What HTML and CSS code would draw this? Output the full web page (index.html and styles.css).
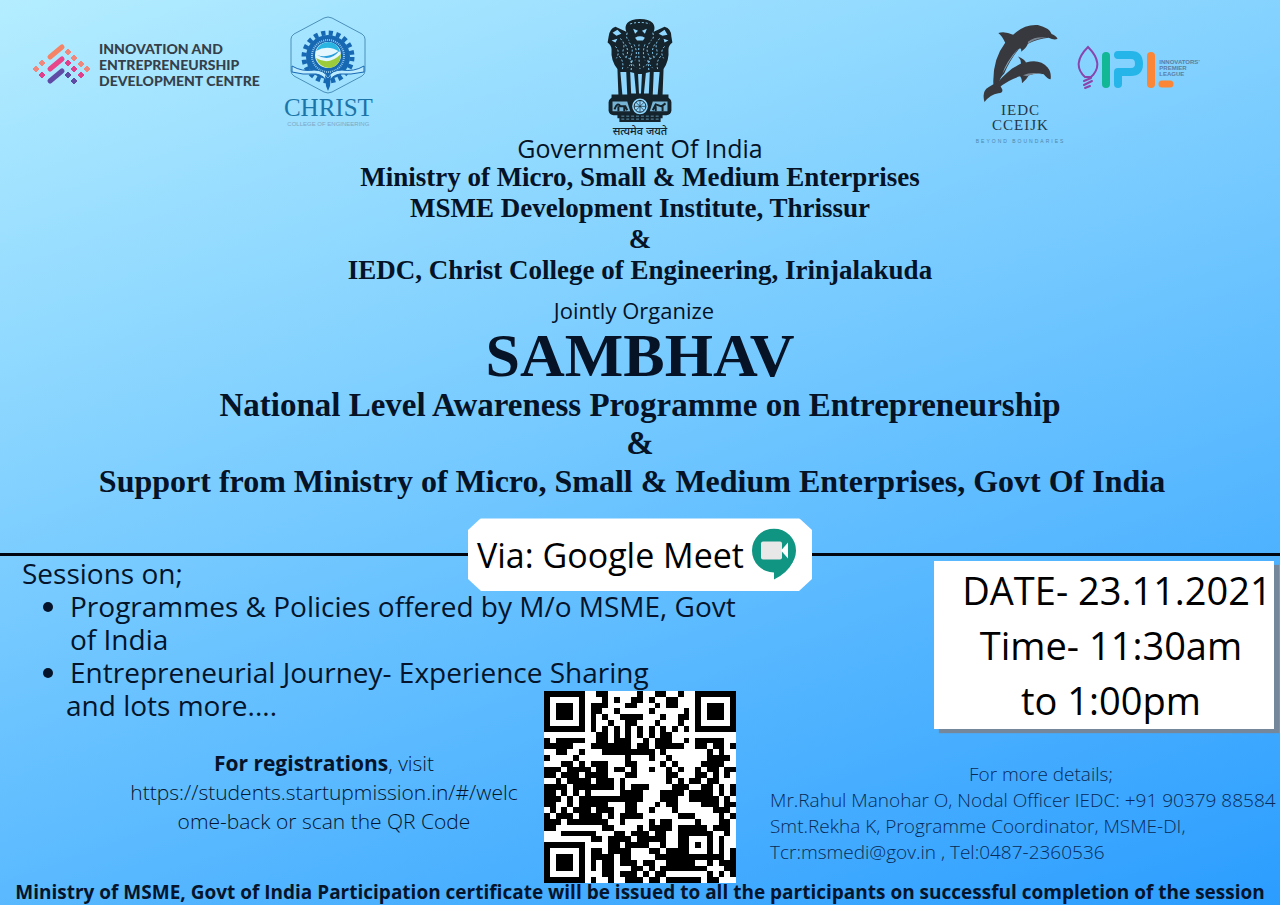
FILE: index.html
```html
<!DOCTYPE html>
<html lang="en">
<head>
<meta charset="utf-8">
<title>SAMBHAV - National Level Awareness Programme</title>
<link rel="stylesheet" href="styles.css">
</head>
<body>
<main class="poster">
  <header class="logos">
    <div class="side">
      <div class="iedc">
        <svg class="iedc-mark" viewBox="0 0 58 44" aria-hidden="true">
          <g stroke-linecap="round" stroke-width="5">
            <path d="M17 14L29 4" stroke="#f58466"/>
            <path d="M17 26L29 16" stroke="#e8458b"/>
            <path d="M17 38L29 28" stroke="#5f4aa5"/>
          </g>
          <g fill="#f0877c">
            <path d="M35 6l3 3-3 3-3-3zM41 12l3 3-3 3-3-3zM48 18l3 3-3 3-3-3zM3 23l3 3-3 3-3-3zM9 17l3 3-3 3-3-3zM54 23l3 3-3 3-3-3z" stroke="#f0877c" stroke-width="1"/>
          </g>
          <g fill="#e0408b" stroke="#e0408b">
            <path d="M9 29l3 3-3 3-3-3zM35 17l3 3-3 3-3-3zM41 23l3 3-3 3-3-3zM48 29l3 3-3 3-3-3z"/>
          </g>
          <path d="M35 29l3 3-3 3-3-3zM41 35l3 3-3 3-3-3z" fill="#5f4aa5" stroke="#5f4aa5"/>
        </svg>
        <p class="iedc-name">INNOVATION AND<br>ENTREPRENEURSHIP<br>DEVELOPMENT CENTRE</p>
      </div>
      <div class="christ">
        <svg class="christ-mark" viewBox="0 0 76 78" aria-hidden="true">
          <path d="M34 2Q38 0 42 2L72 18Q75 20 75 23V55Q75 58 72 60L42 76Q38 78 34 76L4 60Q1 58 1 55V23Q1 20 4 18Z" fill="none" stroke="#4a90b8"/>
          <circle cx="38" cy="41" r="24" fill="none" stroke="#1768b3" stroke-width="5" stroke-dasharray="4.2 3.34"/>
          <circle cx="38" cy="41" r="22" fill="#1768b3"/>
          <circle cx="38" cy="40" r="16" fill="none" stroke="#8cc4ea" stroke-width="2" stroke-dasharray="1 1"/>
          <circle cx="38" cy="39" r="13" fill="#e4f7ff"/>
          <path d="M26 35Q30 26 39 26Q48 27 50 36Q38 28 26 35Z" fill="#29b4e2"/>
          <path d="M26 42Q39 50 51 38Q50 51 39 52Q29 51 26 42Z" fill="#9bcb3b"/>
          <path d="M27 39Q38 43 50 34Q40 47 27 39Z" fill="#2a9edc"/>
          <path d="M2 50Q12 56 24 54Q34 54 38 61Q42 54 52 54Q64 56 74 50V56Q60 59 50 58Q42 59 38 67Q34 59 26 58Q12 59 2 56Z" fill="#bceaff" stroke="#1768b3"/>
          <path d="M35 59L38 62 41 59 40 70 38 75 36 70Z" fill="#1768b3"/>
        </svg>
        <p class="christ-name">CHRIST</p>
        <p class="tiny">COLLEGE OF ENGINEERING</p>
      </div>
    </div>

    <div class="emblem">
      <svg class="emblem-mark" viewBox="0 0 66 108" aria-hidden="true">
        <g fill="#15242c">
          <path d="M20 4Q24 0 33 0Q42 0 46 4Q49 8 47 13L58 8Q65 10 65 18L66 24Q62 27 62 31Q63 42 57 51L56 77H62V84H4V77H11L10 51Q3 42 4 31Q4 27 0 24L1 18Q2 10 8 8L19 13Q17 8 20 4Z"/>
          <rect x="1" y="80" width="64" height="18" rx="5"/>
          <path d="M10 97H56V101H54V105H12V101H10Z"/>
        </g>
        <g fill="#8fd7ff">
          <path d="M13 54L15 77H20L19 54ZM23 54L24 76H29L27 55ZM39 55L37 76H42L43 54ZM47 54L46 77H51L53 54ZM31 56L32 76H34L35 56Z"/>
          <path d="M26 10L31 12 28 15ZM40 10L35 12 38 15ZM28 19Q33 16 38 19L36 22H30ZM5 14L10 11 14 15 9 17ZM52 15L58 11 61 16 56 17ZM4 22L10 20 8 24ZM57 20L62 22 58 24Z"/>
          <path d="M5 84H20L23 94H5ZM43 94L46 84H61V94Z" opacity=".8"/>
        </g>
        <path d="M23 5Q33 2 43 5M13 20Q18 24 16 31T21 40T20 50M22 24Q27 30 24 37T29 49M32 26Q31 35 33 51M43 24Q38 30 42 37T36 49M53 20Q48 24 50 31T45 40T46 50M8 28Q13 33 9 40M58 28Q53 33 57 40M18 26Q22 32 19 39M48 26Q44 32 47 39M27 26Q31 34 28 42M38 26Q35 34 38 42M12 38Q17 44 15 51M54 38Q49 44 51 51M25 42L24 52M41 42L42 52M20 14Q18 20 22 22M46 14Q48 20 44 22" fill="none" stroke="#8fd7ff" stroke-dasharray="2 2"/>
        <path d="M7 92Q10 84 13 89H18L20 93M11 89V94M17 89V94M46 93L49 87 55 89 59 86M49 89V94M56 89V94" fill="none" stroke="#15242c" stroke-width="2"/>
        <circle cx="33" cy="89" r="9" fill="#8fd7ff" stroke="#15242c" stroke-width="2"/>
        <circle cx="33" cy="89" r="6" fill="none" stroke="#15242c"/>
        <path d="M33 83V95M27 89H39M29 85L37 93M37 85L29 93" stroke="#15242c" stroke-width=".7"/>
        <path d="M14 99H52M14 102H52" stroke="#5b91ac" stroke-dasharray="3 2"/>
      </svg>
      <p class="motto" lang="hi">सत्यमेव जयते</p>
    </div>

    <div class="side side-right">
      <div class="dolphins">
        <svg class="dolphin-mark" viewBox="0 0 78 80" aria-hidden="true">
          <path d="M16 9Q23 7 31 11Q42 0 56 1Q68 4 70 10Q75 12 76 15Q73 17 67 14Q56 15 46 20Q44 25 39 28Q40 24 37 25Q28 36 22 50Q16 56 17 61L20 66Q21 70 16 70Q8 71 2 79Q-1 68 6 64L11 61Q10 36 23 19Q20 12 16 9Z" fill="#37393f"/>
          <path d="M36 33Q43 36 44 39Q58 35 66 44Q70 49 69 56Q66 56 62 51Q55 49 47 52Q45 56 40 60Q40 55 38 53Q27 56 16 65L12 63Q19 54 30 45L39 40Q39 36 36 33Z" fill="#37393f"/>
          <path d="M46 18Q54 12 66 14Q55 14 46 20ZM41 52Q50 48 61 51Q52 49 45 53Z" fill="#7b8793"/>
          <path d="M20 51Q24 38 36 25Q27 37 20 51Z" fill="#86a5b7"/>
        </svg>
        <p class="dolphin-name">IEDC<br>CCEIJK</p>
        <p class="tiny beyond">BEYOND BOUNDARIES</p>
      </div>
      <div class="ipl">
        <svg class="ipl-mark" viewBox="0 0 98 46" aria-hidden="true">
          <path d="M8 32Q-6 19 11 2Q28 19 14 32Z" fill="none" stroke="#8a45ad" stroke-width="2"/>
          <path d="M7 36L14 33M7 40L15 36M8 43L13 41" stroke="#8a45ad" stroke-width="2" stroke-linecap="round"/>
          <path d="M29 11V39" stroke="#12b795" stroke-width="8" stroke-linecap="round"/>
          <path d="M41 10H54Q62 10 62 19Q62 27 54 27H41V39" fill="none" stroke="#25b5e9" stroke-width="8" stroke-linecap="round" stroke-linejoin="round"/>
          <path d="M74 11V39" stroke="#fb8637" stroke-width="8" stroke-linecap="round"/>
          <path d="M85 39H93" stroke="#fb8637" stroke-width="7" stroke-linecap="round"/>
        </svg>
        <p class="ipl-name">INNOVATORS’<br>PREMIER<br>LEAGUE</p>
      </div>
    </div>
  </header>

  <section class="titles">
    <p class="gov">Government Of India</p>
    <p class="org">Ministry of Micro, Small &amp; Medium Enterprises</p>
    <p class="org">MSME Development Institute, Thrissur</p>
    <p class="org">&amp;</p>
    <p class="org">IEDC, Christ College of Engineering, Irinjalakuda</p>
    <p class="joint">Jointly Organize</p>
    <h1 class="event">SAMBHAV</h1>
    <p class="theme">National Level Awareness Programme on Entrepreneurship</p>
    <p class="theme">&amp;</p>
    <p class="theme support">Support from Ministry of Micro, Small &amp; Medium Enterprises, Govt Of India</p>
  </section>

  <div class="divider">
    <div class="venue">
      <span>Via: Google Meet</span>
      <svg class="meet" viewBox="0 0 44 52" aria-hidden="true">
        <circle cx="22" cy="22" r="22" fill="#109582"/>
        <path d="M22 40V51Q36 44 41 33Z" fill="#109582"/>
        <rect x="9" y="13" width="21" height="18" rx="2" fill="#e8e8e8"/>
        <path d="M29 22L36 14V30Z" fill="#fff"/>
      </svg>
    </div>
  </div>

  <section class="details">
    <div class="sessions">
      <p>Sessions on;</p>
      <ul class="topics">
        <li>Programmes &amp; Policies offered by M/o MSME, Govt<br>of India</li>
        <li>Entrepreneurial Journey- Experience Sharing</li>
      </ul>
      <p class="more">and lots more....</p>
    </div>
    <div class="schedule">
      <p class="date">DATE- 23.11.2021</p>
      <p>Time- 11:30am</p>
      <p>to 1:00pm</p>
    </div>
    <p class="register"><strong>For registrations</strong>, visit<br>https://students.startupmission.in/#/welc<br>ome-back or scan the QR Code</p>
    <svg class="qr" id="qr" viewBox="0 0 33 33" shape-rendering="crispEdges" role="img" aria-label="QR code"></svg>
    <div class="contact">
      <p class="contact-title">For more details;</p>
      <p>Mr.Rahul Manohar O, Nodal Officer IEDC: +91 90379 88584</p>
      <p>Smt.Rekha K, Programme Coordinator, MSME-DI,</p>
      <p>Tcr:msmedi@gov.in , Tel:0487-2360536</p>
    </div>
  </section>

  <footer class="note">Ministry of MSME, Govt of India Participation certificate will be issued to all the participants on successful completion of the session</footer>
</main>
<script src="qr.js"></script>
</body>
</html>
```
FILE: styles.css
```css
* { box-sizing: border-box; }
body, p, h1, ul { margin: 0; padding: 0; }

body {
  font-family: "Open Sans", "Noto Sans", sans-serif;
  color: #06142b;
}

.poster {
  display: flex;
  flex-direction: column;
  min-height: 100vh;
  overflow: hidden;
  background: linear-gradient(160deg, #b4edff 0%, #76caff 45%, #2b9dff 100%);
}

.logos {
  display: grid;
  grid-template-columns: 1fr auto 1fr;
  height: 135px;
  padding: 16px 80px 0 33px;
}
.side { display: flex; align-items: flex-start; gap: 24px; }
.side-right { justify-content: flex-end; gap: 12px; }

.iedc { display: flex; align-items: center; gap: 8px; padding-top: 25px; }
.iedc-mark { width: 58px; height: 44px; }
.iedc-name {
  font: 900 14px/16px Lato, sans-serif;
  color: #35404a;
  white-space: nowrap;
}

.christ { display: flex; flex-direction: column; align-items: center; }
.christ-mark { width: 76px; height: 78px; }
.christ-name { font: 25px/27px "Liberation Serif", serif; color: #1b75a8; }
.tiny { font: 6px/6px "Liberation Sans", sans-serif; color: #7fa6c4; white-space: nowrap; }

.emblem {
  display: flex;
  flex-direction: column;
  align-items: center;
  padding-top: 3px;
  margin-left: 47px;
}
.emblem-mark { width: 72px; height: 106px; }
.motto { font: 500 11px/14px "Noto Sans Devanagari", "Noto Sans", sans-serif; color: #15242c; }

.dolphins { display: flex; flex-direction: column; align-items: center; padding-top: 8px; }
.dolphin-mark { width: 78px; height: 79px; }
.dolphin-name {
  font: 15px/15px "Liberation Serif", serif;
  letter-spacing: 1px;
  text-align: center;
  color: #243746;
}
.beyond { letter-spacing: 2px; padding-top: 5px; color: #4f86ad; font-size: 5px; }
.ipl { display: flex; align-items: center; padding-top: 29px; }
.ipl-mark { width: 98px; height: 46px; flex: none; margin-right: -16px; }
.ipl-name { font: 700 6px/6px "Liberation Sans", sans-serif; color: #5a7ea2; }

.titles {
  display: flex;
  flex-direction: column;
  align-items: center;
  text-align: center;
  color: #061226;
}
.gov { font-size: 25px; line-height: 27px; }
.org { font: 700 27px/31px "Liberation Serif", serif; }
.joint { font-size: 22px; line-height: 28px; padding-top: 10px; margin-right: 12px; }
.event { font: 700 62px/62px "Liberation Serif", serif; }
.theme { font: 700 33px/38px "Liberation Serif", serif; }
.support { font-size: 32px; margin-right: 16px; }

.divider {
  position: relative;
  height: 3px;
  margin-top: 53px;
  background: #00060f;
}
.venue {
  position: absolute;
  top: 50%;
  left: 50%;
  z-index: 1;
  transform: translate(-50%, -50%);
  display: flex;
  align-items: center;
  gap: 8px;
  height: 73px;
  padding: 0 16px 0 9px;
  background: #fff;
  clip-path: polygon(13px 0, calc(100% - 13px) 0, 100% 12px, 100% calc(100% - 12px), calc(100% - 13px) 100%, 13px 100%, 0 calc(100% - 12px), 0 12px);
  font-size: 34px;
  white-space: nowrap;
  color: #000;
}
.meet { flex: none; width: 44px; height: 52px; }

.details {
  display: grid;
  grid-template-columns: 544px 192px 1fr;
  grid-template-rows: 135px 48px auto;
  color: #06142b;
}
.sessions {
  grid-area: 1 / 1 / 3 / 3;
  padding: 1px 0 0 22px;
  font-size: 28px;
  line-height: 33px;
  white-space: nowrap;
}
.topics { padding-left: 48px; }
.more { padding-left: 44px; }

.schedule {
  grid-area: 1 / 3 / 3 / 4;
  justify-self: end;
  width: 340px;
  height: 168px;
  margin: 5px 6px 0 0;
  padding: 2px 0;
  background: #fff;
  box-shadow: 5px 4px 1px #75889b;
  text-align: center;
  font-size: 38px;
  line-height: 55px;
  color: #000;
  white-space: nowrap;
}
.schedule p { padding-left: 14px; }
.schedule .date { padding-left: 26px; }

.register {
  grid-area: 3 / 1 / 4 / 2;
  padding: 10px 0 0 104px;
  text-align: center;
  font-size: 21px;
  line-height: 29px;
  font-weight: 300;
}
.register strong { font-weight: 700; }

.qr {
  grid-area: 2 / 2 / 4 / 3;
  width: 192px;
  height: 192px;
  background: #fff;
}

.contact {
  grid-area: 3 / 3 / 4 / 4;
  padding: 22px 0 0 34px;
  font-size: 19px;
  line-height: 26px;
  font-weight: 300;
  color: #0a2a55;
  white-space: nowrap;
}
.contact-title { text-align: center; padding-left: 32px; }

.note {
  display: flex;
  justify-content: center;
  font-weight: 700;
  font-size: 19px;
  line-height: 18px;
  white-space: nowrap;
}
```
FILE: qr.js
```javascript
const rows = [
  "111111100110000010011001001111111",
  "100000100010100110100110001000001",
  "101110101110001100010110001011101",
  "101110101100100000100000101011101",
  "101110101010011110001001101011101",
  "100000101001001100010001001000001",
  "111111101010101010101010101111111",
  "000000000110101010101100000000000",
  "101111100110111001011100101111100",
  "111110001111111011011111001101101",
  "001100100011111111101000000010100",
  "100001000000001000100100000011110",
  "000110101110001100001010000111100",
  "111011110110110100100101001011011",
  "110111011110001100000110001101010",
  "001011110111010000000101011011000",
  "111101111111010111000011100110101",
  "110101010000011110001111011110101",
  "111010111111111110001110011111010",
  "110010111110001100010110000111011",
  "010101110111001100100010000001110",
  "101110111101011110000001110000101",
  "111011111110010000101100001000110",
  "110000000011000010111101111101110",
  "000111111000110111011001111110010",
  "000000001101111011111001100010100",
  "111111100001101111001001101010100",
  "100000101101111000110111100010101",
  "101110101111011000011111111111101",
  "101110101011011101100111110010111",
  "101110101011000110101111111100011",
  "100000100011011101011000000010101",
  "111111101001001110110111111011000"
];
const d = rows.map((row, y) =>
  [...row].map((cell, x) => cell === "1" ? `M${x} ${y}h1v1h-1z` : "").join("")
).join("");
const path = document.createElementNS("http://www.w3.org/2000/svg", "path");
path.setAttribute("d", d);
document.getElementById("qr").append(path);
```
